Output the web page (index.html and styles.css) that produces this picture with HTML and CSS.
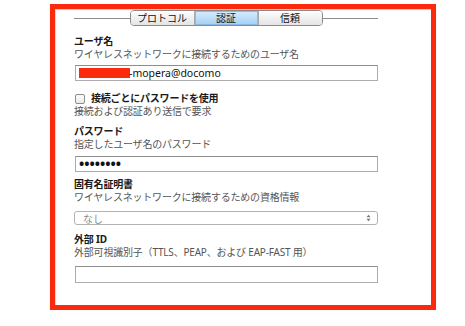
FILE: index.html
```html
<!DOCTYPE html>
<html>
<head>
<meta charset="utf-8">
<title>認証</title>
<link rel="stylesheet" href="styles.css">
</head>
<body>
<div class="frame">
  <div class="pane">
    <div class="tabbar">
      <span class="rule"></span>
      <div class="seg">
        <span class="tab">プロトコル</span>
        <span class="tab on">認証</span>
        <span class="tab">信頼</span>
      </div>
      <span class="rule"></span>
    </div>

    <div class="label first">ユーザ名</div>
    <div class="desc">ワイヤレスネットワークに接続するためのユーザ名</div>
    <div class="field user"><span class="redact"></span><span class="val">-mopera@docomo</span></div>

    <div class="check"><span class="box"></span><span class="label">接続ごとにパスワードを使用</span></div>
    <div class="desc">接続および認証あり送信で要求</div>

    <div class="label gap">パスワード</div>
    <div class="desc">指定したユーザ名のパスワード</div>
    <div class="field pass"><span class="dots">••••••••</span></div>

    <div class="label gap2">固有名証明書</div>
    <div class="desc">ワイヤレスネットワークに接続するための資格情報</div>
    <div class="select">
      <span>なし</span>
      <svg width="5" height="8" viewBox="0 0 5 8"><path d="M0.5 3.2 L2.5 0.8 L4.5 3.2 Z M0.5 4.8 L2.5 7.2 L4.5 4.8 Z" fill="#777"/></svg>
    </div>

    <div class="label gap3">外部 ID</div>
    <div class="desc">外部可視識別子（TTLS、PEAP、および EAP-FAST 用）</div>
    <div class="field outer"></div>
  </div>
</div>
</body>
</html>
```

FILE: styles.css
```css
body {
  margin: 0;
  background: white;
  font-family: "Noto Sans", "Noto Sans CJK JP", sans-serif;
  font-size: 10px;
  color: #1a1a1a;
}

.frame {
  box-sizing: border-box;
  width: 386px;
  height: 306px;
  margin: 4px 0 0 50px;
  border: 5px solid #fb2a0d;
  box-shadow: 0 2px 1px rgba(0,0,0,0.18);
}

.pane {
  box-sizing: border-box;
  height: 100%;
  border-top: 1px solid #cfcfcf;
  border-left: 1px solid #dcdcdc;
  padding-left: 18px;
  display: flex;
  flex-direction: column;
  align-items: flex-start;
}

/* segmented tabs */
.tabbar {
  display: flex;
  align-items: center;
  width: 304px;
  height: 16px;
}
.rule {
  flex: 1;
  height: 1px;
  background: #8c8c8c;
}
.seg {
  display: flex;
  height: 16px;
  box-sizing: border-box;
  border: 1px solid #8a8a8a;
  border-radius: 4px;
  overflow: hidden;
}
.tab {
  width: 63px;
  line-height: 14px;
  text-align: center;
  font-size: 10px;
  color: #111;
  background: linear-gradient(#fdfdfd, #e4e4e4);
  border-left: 1px solid #a8a8a8;
}
.tab:first-child {
  border-left: none;
}
.tab.on {
  background: linear-gradient(#d9ecfd, #a3cff5);
  box-shadow: inset 0 0 0 1px #8db9e2;
}

.label {
  font-weight: bold;
  line-height: 13px;
  letter-spacing: -0.2px;
}
.desc {
  color: #555;
  line-height: 13px;
  letter-spacing: -0.2px;
}
.first { margin-top: 9px; }
.gap { margin-top: 7px; }
.gap2 { margin-top: 6px; }
.gap3 { margin-top: 8px; }

.field {
  box-sizing: border-box;
  width: 303px;
  margin-left: 1px;
  border: 1px solid #acacac;
  border-top-color: #8e8e8e;
  background: white;
  display: flex;
  align-items: center;
}
.user {
  height: 16px;
  margin-top: 4px;
  padding-left: 3px;
}
.redact {
  width: 51px;
  height: 10px;
  background: #fb2a0d;
}
.val {
  font-size: 10.5px;
  color: #111;
  margin-left: -1px;
}
.pass {
  height: 16px;
  margin-top: 5px;
  padding-left: 3px;
}
.dots {
  font-size: 14px;
  line-height: 1;
  font-weight: bold;
  color: #111;
}
.outer {
  height: 17px;
  margin-top: 7px;
}

.check {
  display: flex;
  align-items: center;
  gap: 6px;
  margin-top: 11px;
  margin-left: 1px;
}
.box {
  box-sizing: border-box;
  width: 10px;
  height: 10px;
  border: 1px solid #8c8c8c;
  border-radius: 2px;
  background: linear-gradient(#fff, #e9e9e9);
}

.select {
  box-sizing: border-box;
  width: 304px;
  height: 14px;
  margin-top: 7px;
  border: 1px solid #b3b3b3;
  border-radius: 3px;
  padding: 0 6px 0 8px;
  display: flex;
  align-items: center;
  justify-content: space-between;
  color: #8a8a8a;
}
```
